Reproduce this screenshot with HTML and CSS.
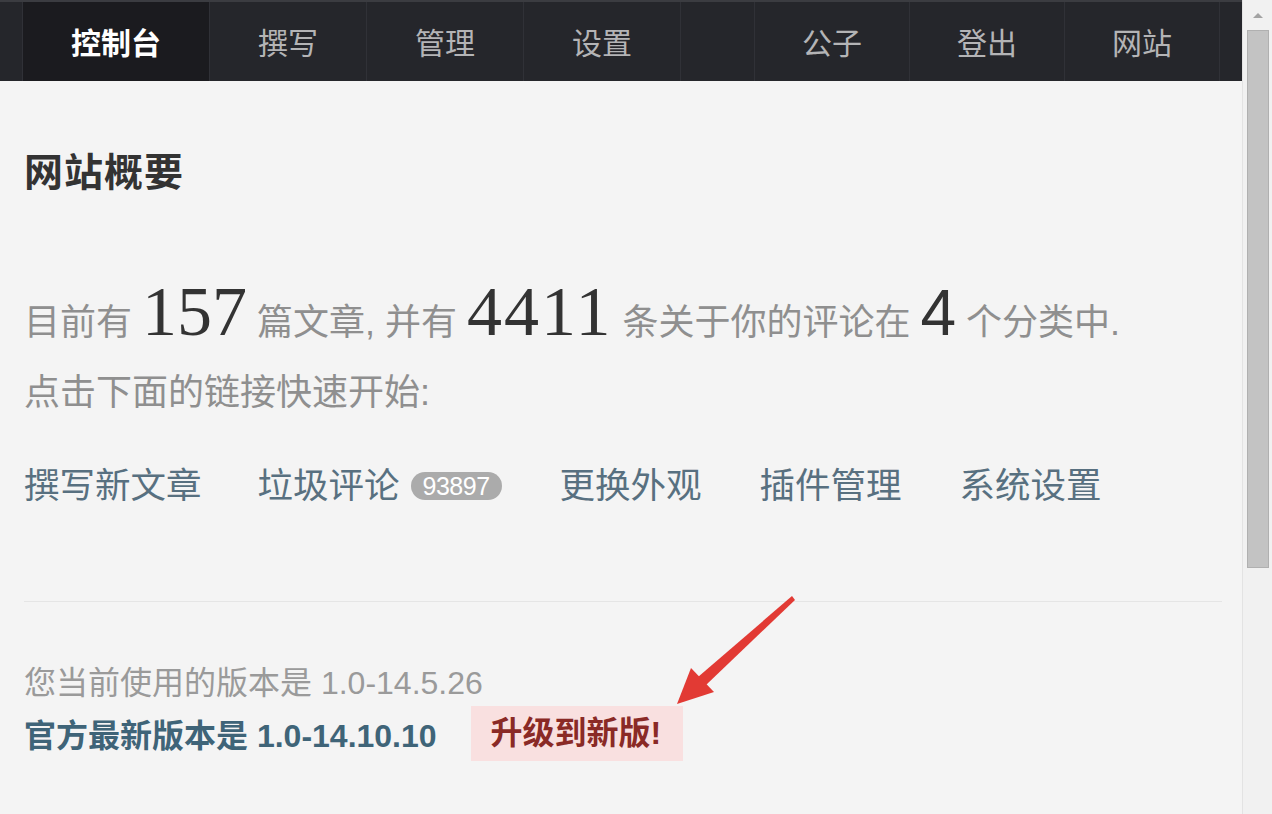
FILE: index.html
```html
<!DOCTYPE html>
<html lang="zh-CN">
<head>
<meta charset="utf-8">
<title>网站概要</title>
<link rel="stylesheet" href="styles.css">
</head>
<body>
<div class="window">
  <div class="page">
    <nav class="topbar">
      <ul class="menu">
        <li class="item active">控制台</li>
        <li class="item">撰写</li>
        <li class="item">管理</li>
        <li class="item">设置</li>
      </ul>
      <ul class="menu right">
        <li class="item">公子</li>
        <li class="item">登出</li>
        <li class="item">网站</li>
      </ul>
    </nav>
    <main class="content">
      <h2 class="title">网站概要</h2>
      <p class="stats">目前有 <em>157</em> 篇文章, 并有 <em class="wide">4411</em> 条关于你的评论在 <em class="sans">4</em> 个分类中.<br>点击下面的链接快速开始:</p>
      <div class="links">
        <a>撰写新文章</a>
        <a>垃圾评论 <span class="badge">93897</span></a>
        <a>更换外观</a>
        <a>插件管理</a>
        <a>系统设置</a>
      </div>
      <hr class="rule">
      <div class="version">
        <div class="current">您当前使用的版本是 1.0-14.5.26</div>
        <div class="latest"><b>官方最新版本是 1.0-14.10.10</b><span class="upgrade">升级到新版!</span></div>
      </div>
    </main>
    <svg class="arrow" width="1242" height="814" viewBox="0 0 1242 814">
      <polygon points="792,596 795,600 706,685 698,677" fill="#e23a34"/>
      <polygon points="677,704 691,668 714,692" fill="#e23a34"/>
    </svg>
  </div>
  <div class="scrollbar">
    <div class="sb-up"><span class="tri"></span></div>
    <div class="sb-thumb"></div>
  </div>
</div>
</body>
</html>
```
FILE: styles.css
```css
html, body {
  margin: 0;
  padding: 0;
  height: 100%;
  overflow: hidden;
}
body {
  background: #f4f4f4;
  font-family: "Liberation Sans", "Noto Sans CJK SC", sans-serif;
  color: #444;
}
.window {
  display: flex;
  height: 814px;
}
.page {
  flex: 1;
  position: relative;
  min-width: 0;
}
.topbar {
  display: flex;
  justify-content: space-between;
  height: 79px;
  background: #25262b;
  border-top: 2px solid #3b3c41;
  padding: 0 22px;
}
.menu {
  display: flex;
  margin: 0;
  padding: 0;
  list-style: none;
  border-left: 1px solid #303137;
}
.item {
  padding: 0 48px;
  line-height: 79px;
  font-size: 30px;
  color: #b4b4b6;
  border-right: 1px solid #303137;
  font-family: "Noto Sans CJK SC", sans-serif;
}
.menu.right .item {
  padding: 0 47px;
}
.item.active {
  background: #1b1b1f;
  color: #fff;
  font-weight: 700;
}
.content {
  padding: 0 20px 0 24px;
}
.title {
  margin: 66px 0 0;
  font-size: 39px;
  line-height: 44px;
  font-weight: 700;
  color: #333;
  font-family: "Noto Sans CJK SC", serif;
  letter-spacing: 1px;
}
.stats {
  margin: 97px 0 0;
  font-size: 36px;
  line-height: 70px;
  color: #8f8f8f;
}
.stats em {
  font-style: normal;
  font-family: "Liberation Serif", serif;
  font-size: 70px;
  line-height: 0;
  color: #333;
}
.stats em.wide {
  letter-spacing: 2px;
}
.stats em.sans {
  font-family: "Liberation Sans", sans-serif;
  font-weight: 300;
  font-size: 64px;
}
.links {
  display: flex;
  align-items: center;
  gap: 58px;
  margin-top: 38px;
  height: 40px;
  font-size: 35.5px;
  line-height: 40px;
}
.links a {
  color: #587080;
  display: flex;
  align-items: center;
  gap: 11px;
}
.links a:first-child {
  margin-right: -2px;
}
.badge {
  display: inline-block;
  background: #ababab;
  color: #fff;
  font-size: 25px;
  line-height: 28px;
  height: 28px;
  padding: 0 12px;
  border-radius: 14px;
  letter-spacing: -0.5px;
}
.rule {
  margin: 95px 0 0;
  border: 0;
  border-top: 1px solid #e5e5e5;
  height: 0;
}
.version {
  margin-top: 56px;
  font-size: 32px;
}
.current {
  line-height: 50px;
  color: #9a9a9a;
}
.latest {
  display: flex;
  align-items: center;
  height: 50px;
}
.latest b {
  color: #3f6478;
  font-weight: 700;
}
.upgrade {
  margin-left: 34px;
  background: #f9e0e0;
  color: #8a2a26;
  font-weight: 700;
  height: 55px;
  line-height: 55px;
  padding: 0 22px 0 20px;
}
.arrow {
  position: absolute;
  left: 0;
  top: 0;
  pointer-events: none;
}
.scrollbar {
  width: 29px;
  flex: none;
  background: #f1f1f1;
  border-left: 1px solid #e3e3e3;
  display: flex;
  flex-direction: column;
  align-items: center;
}
.sb-up {
  height: 30px;
  width: 100%;
  display: flex;
  align-items: center;
  justify-content: center;
}
.tri {
  width: 0;
  height: 0;
  border-left: 5px solid transparent;
  border-right: 5px solid transparent;
  border-bottom: 5px solid #a3a3a3;
}
.sb-thumb {
  width: 22px;
  height: 538px;
  background: #c3c3c3;
  border: 1px solid #b0b0b0;
  box-sizing: border-box;
}
```
